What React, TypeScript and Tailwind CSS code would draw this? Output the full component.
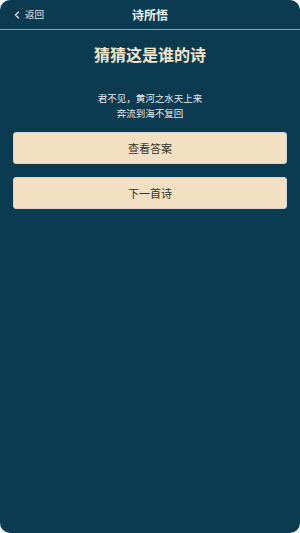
import { ChevronLeft } from "lucide-react";

const FONT = { fontFamily: '"Noto Sans CJK SC", "Noto Sans", sans-serif' };

export default function App() {
  return (
    <div className="w-[300px] h-[533px] bg-white" style={FONT}>
      <div className="h-full bg-[#0b3b50] rounded-[10px] flex flex-col">
        {/* Header */}
        <div className="h-[30px] shrink-0 border-b border-[#7fa5b3] flex items-center relative">
          <div className="flex items-center pl-[11px] text-[9.5px] text-[#e6e6e6] gap-[2px]">
            <ChevronLeft size={12} strokeWidth={2.5} />
            <span>返回</span>
          </div>
          <div className="absolute inset-0 flex items-center justify-center text-[12px] font-bold text-[#f3efe6]">
            诗所悟
          </div>
        </div>

        {/* Content */}
        <div className="flex flex-col items-center px-[13px]">
          <h1 className="mt-[12px] text-[16px] leading-[24px] font-bold text-[#f1e4c8]">
            猜猜这是谁的诗
          </h1>
          <div className="mt-[25px] text-[9.5px] leading-[15px] text-[#e8e8e8] text-center">
            <p>君不见，黄河之水天上来</p>
            <p>奔流到海不复回</p>
          </div>
          <button className="mt-[11px] w-full h-[32px] rounded-[3px] bg-[#f3e0c2] border border-[#d9d4cc] text-[11px] text-[#333333]">
            查看答案
          </button>
          <button className="mt-[13px] w-full h-[32px] rounded-[3px] bg-[#f3e0c2] border border-[#d9d4cc] text-[11px] text-[#333333]">
            下一首诗
          </button>
        </div>
      </div>
    </div>
  );
}
